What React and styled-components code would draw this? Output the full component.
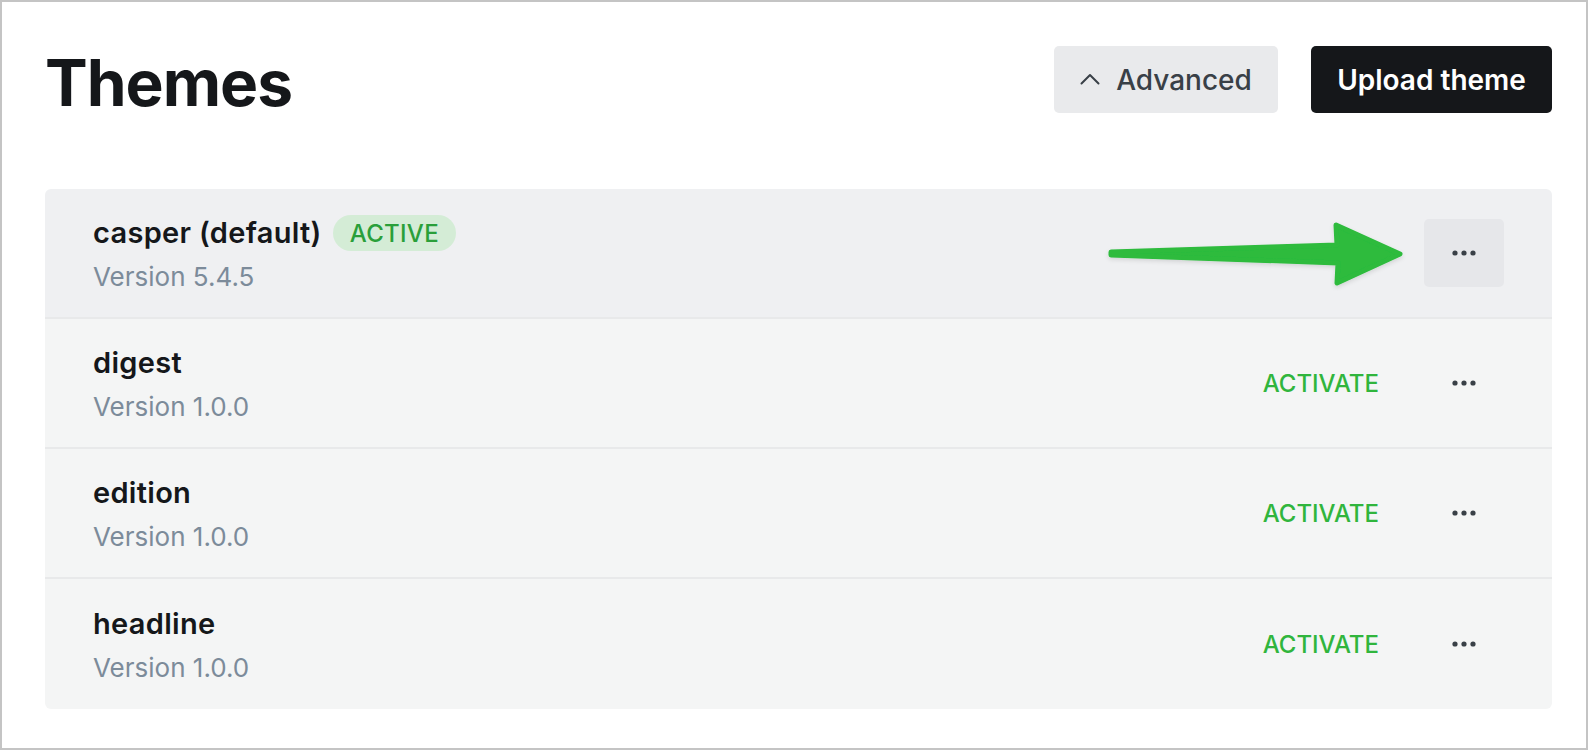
import React from "react";
import styled, { createGlobalStyle } from "styled-components";

const GlobalStyle = createGlobalStyle`
  html, body {
    margin: 0;
    padding: 0;
    background: #ffffff;
  }
  body {
    font-family: Inter, "Noto Sans", "Liberation Sans", sans-serif;
    -webkit-font-smoothing: antialiased;
  }
`;

const THEMES = [
  { name: "casper (default)", version: "5.4.5", active: true },
  { name: "digest", version: "1.0.0" },
  { name: "edition", version: "1.0.0" },
  { name: "headline", version: "1.0.0" },
];

const App = () => {
  return (
    <>
      <GlobalStyle />
      <Frame>
        <Header>
          <Title>Themes</Title>
          <Actions>
            <GhostButton>
              <Chevron viewBox="0 0 20 12" aria-hidden="true">
                <path d="M1.5 10.5 L10 2 L18.5 10.5" />
              </Chevron>
              Advanced
            </GhostButton>
            <PrimaryButton>Upload theme</PrimaryButton>
          </Actions>
        </Header>

        <List>
          {THEMES.map((theme) => (
            <Row key={theme.name} $active={theme.active}>
              <Info>
                <NameLine>
                  <Name>{theme.name}</Name>
                  {theme.active && <Badge>ACTIVE</Badge>}
                </NameLine>
                <Version>Version {theme.version}</Version>
              </Info>
              <RowActions>
                {!theme.active && <ActivateLink>ACTIVATE</ActivateLink>}
                <MenuButton $open={theme.active} aria-label="More">
                  <Dots viewBox="0 0 24 6" aria-hidden="true">
                    <circle cx="3" cy="3" r="2.6" />
                    <circle cx="12" cy="3" r="2.6" />
                    <circle cx="21" cy="3" r="2.6" />
                  </Dots>
                </MenuButton>
              </RowActions>
            </Row>
          ))}
        </List>

        {/* annotation pointing at the menu of the active theme */}
        <Pointer viewBox="0 0 310 80" aria-hidden="true">
          <defs>
            <filter id="arrowShadow" x="-10%" y="-30%" width="120%" height="160%">
              <feDropShadow dx="0" dy="2" stdDeviation="2" floodColor="#000" floodOpacity="0.12" />
            </filter>
          </defs>
          <polygon
            points="11,37 237,30 236,10 300,39 237,68 238,48 11,40"
            filter="url(#arrowShadow)"
          />
        </Pointer>
      </Frame>
    </>
  );
};

const Frame = styled.div`
  position: relative;
  box-sizing: border-box;
  width: 1588px;
  height: 750px;
  border: 2px solid #c4c4c4;
  padding: 44px 34px 0 43px;
  overflow: hidden;
`;

const Header = styled.div`
  display: flex;
  align-items: center;
  justify-content: space-between;
  height: 67px;
`;

const Title = styled.h1`
  margin: 0;
  font-size: 64px;
  font-weight: 700;
  letter-spacing: -1px;
  color: #15171a;
  line-height: 1;
  padding-top: 6px;
`;

const Actions = styled.div`
  display: flex;
  gap: 33px;
`;

const BaseButton = styled.button`
  display: inline-flex;
  align-items: center;
  justify-content: center;
  height: 67px;
  border: none;
  border-radius: 5px;
  font-family: inherit;
  font-size: 28px;
  cursor: pointer;
`;

const GhostButton = styled(BaseButton)`
  width: 224px;
  gap: 16px;
  background: #e9eaec;
  color: #394047;
  font-weight: 500;
`;

const Chevron = styled.svg`
  width: 20px;
  height: 12px;
  fill: none;
  stroke: #394047;
  stroke-width: 2;
  stroke-linecap: round;
  stroke-linejoin: round;
  margin-top: -2px;
`;

const PrimaryButton = styled(BaseButton)`
  width: 241px;
  background: #15171a;
  color: #ffffff;
  font-weight: 600;
`;

const List = styled.div`
  margin-top: 76px;
  border-radius: 6px;
  overflow: hidden;
`;

const Row = styled.div`
  display: flex;
  align-items: center;
  justify-content: space-between;
  box-sizing: border-box;
  height: 130px;
  padding: 0 48px 0 48px;
  background: ${(p) => (p.$active ? "#eff0f2" : "#f4f5f5")};
  border-bottom: 2px solid #e8e9ea;

  &:last-child {
    border-bottom: none;
  }
`;

const Info = styled.div`
  display: flex;
  flex-direction: column;
  gap: 8px;
  margin-top: 2px;
`;

const NameLine = styled.div`
  display: flex;
  align-items: center;
  gap: 11px;
`;

const Name = styled.span`
  font-size: 29px;
  font-weight: 600;
  letter-spacing: 0.3px;
  color: #15171a;
  line-height: 38px;
`;

const Badge = styled.span`
  display: inline-flex;
  align-items: center;
  height: 36px;
  padding: 0 17px;
  border-radius: 18px;
  background: #d4ecd6;
  color: #2a9f3a;
  font-size: 24px;
  font-weight: 500;
  letter-spacing: 0.3px;
`;

const Version = styled.span`
  font-size: 26px;
  color: #7c8b9a;
  line-height: 34px;
`;

const RowActions = styled.div`
  display: flex;
  align-items: center;
  gap: 45px;
`;

const ActivateLink = styled.span`
  font-size: 24px;
  font-weight: 500;
  color: #30b53d;
`;

const MenuButton = styled.button`
  display: flex;
  align-items: center;
  justify-content: center;
  width: 80px;
  height: 68px;
  border: none;
  border-radius: 5px;
  background: ${(p) => (p.$open ? "#e6e7ea" : "transparent")};
  cursor: pointer;
`;

const Dots = styled.svg`
  width: 24px;
  height: 6px;
  fill: #394047;
`;

const Pointer = styled.svg`
  position: absolute;
  left: 1098px;
  top: 213px;
  width: 310px;
  height: 80px;
  fill: #2dbb3d;
  stroke: #2dbb3d;
  stroke-width: 5;
  stroke-linejoin: round;
  pointer-events: none;
`;

export default App;
